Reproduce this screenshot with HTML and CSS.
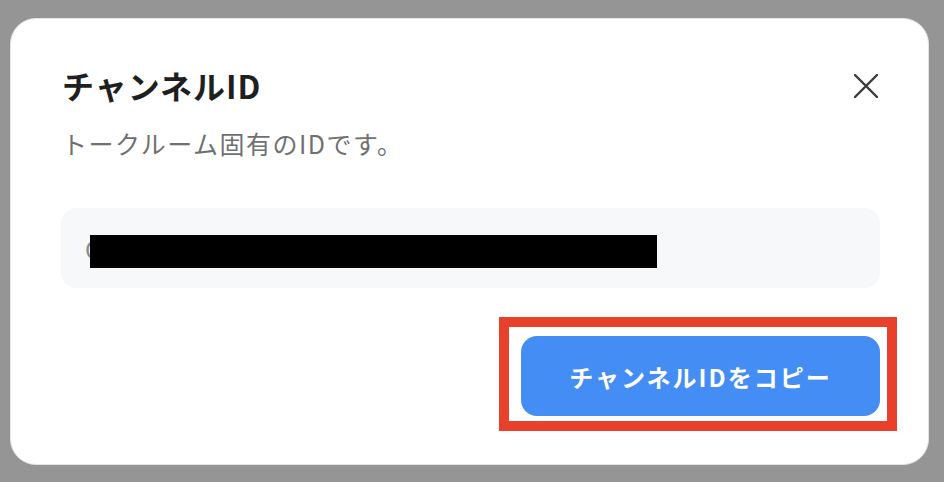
FILE: index.html
```html
<!DOCTYPE html>
<html lang="ja">
<head>
    <meta charset="utf-8">
    <title>チャンネルID</title>
    <link rel="stylesheet" href="styles.css">
</head>
<body>
    <div class="dialog">
        <div class="dialog-header">
            <h1 class="dialog-title">チャンネルID</h1>
            <button class="close-btn" aria-label="閉じる">
                <svg width="24" height="24" viewBox="0 0 24 24">
                    <path d="M1 1L23 23M23 1L1 23" stroke="#3a3a3c" stroke-width="2.4" stroke-linecap="round" fill="none"/>
                </svg>
            </button>
        </div>
        <p class="dialog-desc">トークルーム固有のIDです。</p>

        <div class="id-field">
            <span class="id-text">C</span>
            <span class="redact"></span>
        </div>

        <div class="actions">
            <div class="copy-wrap">
                <button class="copy-btn">チャンネルIDをコピー</button>
                <span class="highlight"></span>
            </div>
        </div>
    </div>
</body>
</html>
```

FILE: styles.css
```css
body {
    margin: 0;
    background: #959595;
    font-family: "Noto Sans CJK JP", "Noto Sans", sans-serif;
}
.dialog {
    box-sizing: border-box;
    width: 919px;
    height: 447px;
    margin: 18px 0 0 10px;
    padding: 46px 48px 0 50px;
    background: #fff;
    border: 1px solid #e3e3e8;
    border-radius: 26px;
}
.dialog-header {
    display: flex;
    justify-content: space-between;
    align-items: center;
}
.dialog-title {
    margin: 0 0 0 1px;
    font-size: 32px;
    line-height: 40px;
    font-weight: 700;
    color: #1f1f21;
    letter-spacing: 1px;
}
.close-btn {
    border: none;
    background: none;
    padding: 0;
    margin-right: 2px;
    margin-top: 2px;
    width: 24px;
    height: 24px;
    cursor: pointer;
}
.dialog-desc {
    margin: 22px 0 0 1px;
    font-size: 25px;
    line-height: 32px;
    letter-spacing: 1.5px;
    color: #707073;
}
.id-field {
    position: relative;
    margin-top: 49px;
    height: 80px;
    background: #f7f8fa;
    border-radius: 16px;
    padding-left: 24px;
    display: flex;
    align-items: center;
}
.id-text {
    font-size: 24px;
    color: #8a8a8c;
}
.redact {
    position: absolute;
    left: 29px;
    top: 27px;
    width: 567px;
    height: 33px;
    background: #000;
}
.actions {
    display: flex;
    justify-content: flex-end;
    margin-top: 48px;
}
.copy-wrap {
    position: relative;
}
.copy-btn {
    display: block;
    width: 359px;
    height: 80px;
    border: none;
    border-radius: 16px;
    background: #438df5;
    color: #fff;
    font-family: "Noto Sans CJK JP", "Noto Sans", sans-serif;
    font-size: 24px;
    font-weight: 700;
    letter-spacing: 2px;
    cursor: pointer;
}
.highlight {
    position: absolute;
    top: -19px;
    right: -17px;
    bottom: -15px;
    left: -22px;
    border: 10px solid #e8402a;
    pointer-events: none;
}
```
